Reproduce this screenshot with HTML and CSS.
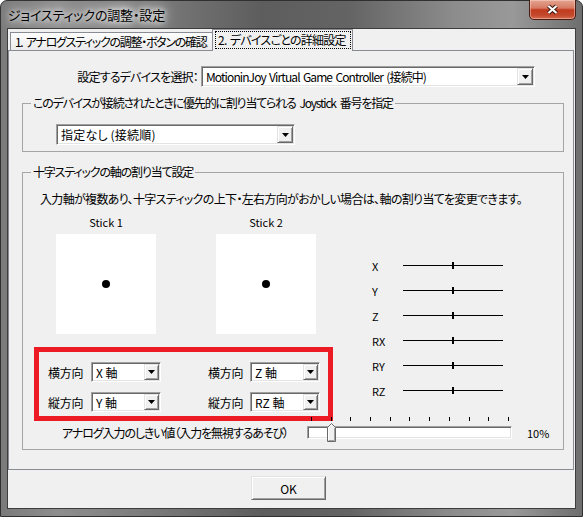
FILE: index.html
```html
<!DOCTYPE html>
<html lang="ja">
<head>
<meta charset="utf-8">
<title>ジョイスティックの調整・設定</title>
<link rel="stylesheet" href="styles.css">
</head>
<body>
<div class="window">
  <div class="titlebar">
    <span class="title">ジョイスティックの調整・設定</span>
    <div class="close">
      <svg width="13" height="11" viewBox="0 0 13 11"><path d="M2.5 2 L10.5 9 M10.5 2 L2.5 9" stroke="#3b1a14" stroke-width="4.2" fill="none"/><path d="M2.5 2 L10.5 9 M10.5 2 L2.5 9" stroke="#fff" stroke-width="2.2" fill="none"/></svg>
    </div>
  </div>
  <div class="client">
    <div class="tabs">
      <div class="tab tab-1">1. アナログスティックの調整・ボタンの確認</div>
      <div class="tab active"><span class="focus">2. デバイスごとの詳細設定</span></div>
    </div>
    <div class="panel">
      <div class="device-row">
        <span class="device-label">設定するデバイスを選択：</span>
        <div class="combo combo-device"><span class="combo-text">MotioninJoy Virtual Game Controller (接続中)</span><span class="combo-btn"><svg width="7" height="4" viewBox="0 0 7 4"><path d="M0 0H7L3.5 4Z" fill="#000"/></svg></span></div>
      </div>
      <fieldset class="group group-joy">
        <legend>このデバイスが接続されたときに優先的に割り当てられる Joystick 番号を指定</legend>
        <div class="combo combo-joy"><span class="combo-text">指定なし (接続順)</span><span class="combo-btn"><svg width="7" height="4" viewBox="0 0 7 4"><path d="M0 0H7L3.5 4Z" fill="#000"/></svg></span></div>
      </fieldset>
      <fieldset class="group group-axis">
        <legend>十字スティックの軸の割り当て設定</legend>
        <p class="desc">入力軸が複数あり、十字スティックの上下・左右方向がおかしい場合は、軸の割り当てを変更できます。</p>
        <div class="axis-area">
          <div class="left-col">
            <div class="sticks">
              <div class="stick"><div class="stick-label">Stick 1</div><div class="stick-box"><span class="dot"></span></div></div>
              <div class="stick"><div class="stick-label">Stick 2</div><div class="stick-box"><span class="dot"></span></div></div>
            </div>
            <div class="assign">
              <span class="assign-label">横方向</span>
              <div class="combo combo-small"><span class="combo-text">X 軸</span><span class="combo-btn"><svg width="7" height="4" viewBox="0 0 7 4"><path d="M0 0H7L3.5 4Z" fill="#000"/></svg></span></div>
              <span class="assign-gap"></span>
              <span class="assign-label">横方向</span>
              <div class="combo combo-small"><span class="combo-text">Z 軸</span><span class="combo-btn"><svg width="7" height="4" viewBox="0 0 7 4"><path d="M0 0H7L3.5 4Z" fill="#000"/></svg></span></div>
              <span class="assign-label">縦方向</span>
              <div class="combo combo-small"><span class="combo-text">Y 軸</span><span class="combo-btn"><svg width="7" height="4" viewBox="0 0 7 4"><path d="M0 0H7L3.5 4Z" fill="#000"/></svg></span></div>
              <span class="assign-gap"></span>
              <span class="assign-label">縦方向</span>
              <div class="combo combo-small"><span class="combo-text">RZ 軸</span><span class="combo-btn"><svg width="7" height="4" viewBox="0 0 7 4"><path d="M0 0H7L3.5 4Z" fill="#000"/></svg></span></div>
            </div>
          </div>
          <ul class="axis-list">
            <li><span class="axis-name">X</span><span class="axis-bar"><span class="axis-tick"></span></span></li>
            <li><span class="axis-name">Y</span><span class="axis-bar"><span class="axis-tick"></span></span></li>
            <li><span class="axis-name">Z</span><span class="axis-bar"><span class="axis-tick"></span></span></li>
            <li><span class="axis-name">RX</span><span class="axis-bar"><span class="axis-tick"></span></span></li>
            <li><span class="axis-name">RY</span><span class="axis-bar"><span class="axis-tick"></span></span></li>
            <li><span class="axis-name">RZ</span><span class="axis-bar"><span class="axis-tick"></span></span></li>
          </ul>
        </div>
        <div class="threshold">
          <span class="th-label">アナログ入力のしきい値（入力を無視するあそび）</span>
          <div class="slider">
            <div class="ticks"><i></i><i></i><i></i><i></i><i></i><i></i><i></i><i></i><i></i><i></i><i></i></div>
            <div class="track"></div>
            <svg class="thumb" width="9" height="19" viewBox="0 0 9 19"><path d="M0.5 4.5 L4.5 0.5 L8.5 4.5 V18.5 H0.5 Z" fill="#f0f0f0" stroke="#696969"/><path d="M1.5 17.5 V4.9 L4.5 1.9" fill="none" stroke="#fff"/><path d="M7.5 5 V17.5 H1.5" fill="none" stroke="#a0a0a0"/></svg>
          </div>
          <span class="th-value">10%</span>
        </div>
      </fieldset>
    </div>
    <div class="buttons"><button class="ok" type="button">OK</button></div>
  </div>
</div>
</body>
</html>
```

FILE: styles.css
```css
* { box-sizing: border-box; }
html, body { margin: 0; padding: 0; }
body {
  width: 583px;
  height: 517px;
  overflow: hidden;
  background: #fff;
  font-family: "Noto Sans CJK JP", "Noto Sans", sans-serif;
  font-size: 12px;
  font-feature-settings: "palt";
  color: #000;
}

.window {
  width: 583px;
  height: 517px;
  display: flex;
  flex-direction: column;
  border: 1px solid #303030;
  border-radius: 7px 7px 0 0;
  padding: 0 6px 7px 6px;
  background: linear-gradient(to right, #7a7a7a 0%, #8e8e8e 10%, #777 28%, #5d5d5d 45%, #646464 60%, #8c8c8c 78%, #999 88%, #6e6e6e 100%);
}

.titlebar {
  height: 27px;
  display: flex;
  align-items: flex-start;
}
.title {
  margin-top: 5px;
  padding-left: 1px;
  font-size: 13px;
  line-height: 17px;
  letter-spacing: -0.15px;
  text-shadow: 0 0 5px #f4f4f4, 0 0 9px #ececec, 0 0 14px #e0e0e0, 0 0 20px #d0d0d0;
}
.close {
  margin-left: auto;
  margin-top: -1px;
  width: 47px;
  height: 20px;
  display: flex;
  align-items: center;
  justify-content: center;
  border: 1px solid #4a1d14;
  border-top: none;
  border-radius: 0 0 5px 5px;
  background: linear-gradient(#e4a591 0%, #d67b63 42%, #c23b1e 52%, #c3482c 80%, #d76c4e 100%);
  box-shadow: inset 0 0 0 1px rgba(255, 220, 210, 0.45);
}

.client {
  height: 481px;
  border: 1px solid #3d3d3d;
  background: #f0f0f0;
}

.tabs {
  height: 21px;
  display: flex;
  align-items: flex-end;
  padding-left: 2px;
}
.tab {
  height: 18px;
  padding: 0 4px;
  line-height: 17px;
  border: 1px solid #898c95;
  border-bottom: none;
  background: linear-gradient(#fdfdfd, #ebebeb);
  white-space: nowrap;
}
.tab-1 {
  width: 203px;
  letter-spacing: -1.3px;
  word-spacing: 2px;
}
.tab.active {
  position: relative;
  width: 141px;
  height: 22px;
  margin-left: -1px;
  margin-bottom: -1px;
  padding: 1px 1px 0 2px;
  background: #f0f0f0;
  letter-spacing: -0.75px;
  word-spacing: 1.5px;
}
.focus {
  display: block;
  height: 18px;
  padding: 0 2px 0 2px;
  line-height: 16px;
  border: 1px dotted #000;
}

.panel {
  height: 420px;
  margin-right: 1px;
  border: 1px solid #898c95;
  background: #f0f0f0;
}

.device-row {
  margin-top: 15px;
  height: 21px;
  display: flex;
  align-items: center;
}
.device-label {
  width: 190px;
  padding-right: 1px;
  text-align: right;
  white-space: nowrap;
  letter-spacing: -0.8px;
}

.combo {
  height: 21px;
  display: flex;
  align-items: center;
  background: #fff;
  border: 1px solid;
  border-color: #a0a0a0 #fff #fff #a0a0a0;
  box-shadow: inset 1px 1px 0 #696969, inset -1px -1px 0 #e3e3e3;
  padding: 0 1px 0 4px;
}
.combo-text {
  flex: 1;
  white-space: nowrap;
  line-height: 17px;
}
.combo-btn {
  width: 16px;
  height: 17px;
  display: flex;
  align-items: center;
  justify-content: center;
  background: #f0f0f0;
  border: 1px solid;
  border-color: #e3e3e3 #696969 #696969 #e3e3e3;
  box-shadow: inset 1px 1px 0 #fff, inset -1px -1px 0 #a0a0a0;
}
.combo-device { width: 334px; margin-left: 2px; }
.combo-device .combo-text { letter-spacing: -0.9px; word-spacing: 1.5px; }
.combo-joy { width: 239px; margin: 13px 0 0 25px; }
.combo-joy .combo-text { letter-spacing: 0.2px; }
.combo-small { width: 70px; height: 20px; }
.combo-small .combo-btn { width: 15px; height: 16px; }

.group {
  margin: 0 0 0 13px;
  width: 542px;
  min-width: 0;
  padding: 0 8px;
  border: 1px solid #a5a5a5;
}
.group legend {
  padding: 0 2px;
  line-height: 16px;
  white-space: nowrap;
}
.group-joy {
  margin-top: 8px;
  padding-bottom: 6px;
}
.group-joy legend { letter-spacing: -1.2px; word-spacing: 2.5px; }
.group-axis {
  margin-top: 12px;
  padding-bottom: 8px;
}
.group-axis legend { letter-spacing: -1.15px; }

.desc {
  margin: 11px 0 0 9px;
  line-height: 16px;
  white-space: nowrap;
  letter-spacing: -0.66px;
}

.axis-area {
  margin-top: 7px;
  display: flex;
  align-items: flex-start;
}
.left-col { width: 302px; }
.sticks {
  display: flex;
  gap: 60px;
  margin-left: 25px;
}
.stick { width: 100px; }
.stick-label {
  line-height: 16px;
  text-align: center;
  font-size: 11px;
}
.stick-box {
  margin-top: 4px;
  width: 100px;
  height: 100px;
  background: #fff;
  display: flex;
  align-items: center;
  justify-content: center;
}
.dot {
  width: 8px;
  height: 8px;
  border-radius: 50%;
  background: #000;
}

.assign {
  margin: 13px 0 0 3px;
  width: 299px;
  height: 74px;
  border: 5px solid #ed1c24;
  padding: 10px 0 0 9px;
  display: grid;
  grid-template-columns: 43px 70px 47px 42px 70px;
  grid-auto-rows: 20px;
  row-gap: 10px;
  align-items: center;
}
.assign-gap { display: block; }
.assign-label { white-space: nowrap; letter-spacing: -0.3px; }

.axis-list {
  list-style: none;
  margin: 39px 0 0 39px;
  padding: 0;
}
.axis-list li {
  height: 25px;
  display: flex;
  align-items: center;
}
.axis-name {
  width: 31px;
  font-size: 11px;
}
.axis-bar {
  width: 100px;
  height: 7px;
  display: flex;
  justify-content: center;
  background: linear-gradient(#000, #000) center / 100% 1px no-repeat;
}
.axis-tick {
  width: 2px;
  height: 7px;
  background: #000;
}

.threshold {
  margin-top: -4px;
  height: 24px;
  display: flex;
  align-items: flex-start;
}
.th-label {
  margin: 8px 0 0 31px;
  width: 245px;
  line-height: 16px;
  white-space: nowrap;
  letter-spacing: -1.1px;
}
.slider {
  position: relative;
  width: 205px;
  height: 24px;
}
.ticks {
  height: 4px;
  margin: 0 3px 0 4px;
  display: flex;
  justify-content: space-between;
}
.ticks i {
  display: block;
  width: 1px;
  height: 4px;
  background: #000;
}
.track {
  margin-top: 5px;
  height: 13px;
  background: #fff;
  border: 1px solid;
  border-color: #a0a0a0 #fff #fff #a0a0a0;
  box-shadow: inset 1px 1px 0 #696969, inset -1px -1px 0 #e3e3e3;
}
.thumb {
  position: absolute;
  left: 20px;
  top: 6px;
}
.th-value {
  margin: 8px 0 0 15px;
  line-height: 16px;
  font-size: 11px;
}

.buttons {
  margin-top: 6px;
  padding-left: 243px;
}
.ok {
  width: 75px;
  height: 24px;
  padding: 0;
  font: inherit;
  font-size: 12px;
  color: #000;
  background: #f0f0f0;
  border: 1px solid;
  border-color: #e3e3e3 #696969 #696969 #e3e3e3;
  box-shadow: inset 1px 1px 0 #fff, inset -1px -1px 0 #a0a0a0;
}
```
